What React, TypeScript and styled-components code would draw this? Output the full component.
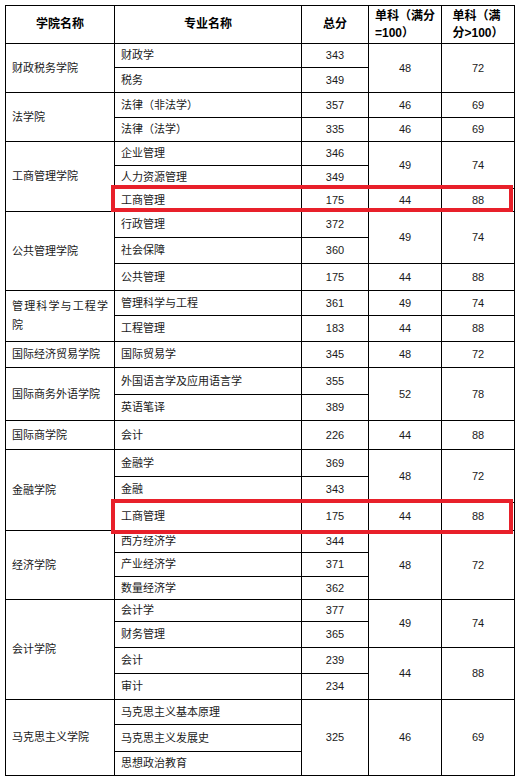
import React from 'react';
import styled, { createGlobalStyle } from 'styled-components';

const Global = createGlobalStyle`
  html, body { margin: 0; padding: 0; background: #fff; }
  body {
    padding: 5px 0 0 5px;
    font-family: "Liberation Sans", "Noto Sans CJK SC", sans-serif;
    color: #1a1a1a;
  }
`;

const ROW_HEIGHTS = [
  24, 25, 25, 24, 24, 23, 23, 26, 26, 27, 25, 26, 26, 27, 26, 29, 27, 26, 28, 22,
  24, 23, 22, 26, 26, 26, 25, 27, 24,
];

const Table = styled.div<{ $rows: string }>`
  display: grid;
  grid-template-columns: 109px 187px 67px 73px 73px;
  grid-template-rows: 38px ${(p) => p.$rows};
  width: max-content;
  border-top: 1px solid #000;
  border-left: 1px solid #000;
`;

const Cell = styled.div<{ $row: number; $span: number; $col: number; $center?: boolean }>`
  grid-row: ${(p) => p.$row} / span ${(p) => p.$span};
  grid-column: ${(p) => p.$col};
  box-sizing: border-box;
  border-right: 1px solid #000;
  border-bottom: 1px solid #000;
  display: flex;
  align-items: center;
  justify-content: ${(p) => (p.$center ? 'center' : 'flex-start')};
  padding: 0 6px;
  min-width: 0;
  font-size: 11px;
  line-height: 19px;
`;

const HeadCell = styled(Cell)`
  justify-content: center;
  padding: 0;
  font-size: 12px;
  font-weight: 700;
  line-height: 17px;
  color: #000;
`;

const HeadText = styled.span`
  display: inline-block;
  text-align: left;
`;

const Label = styled.span<{ $justify?: boolean }>`
  display: block;
  width: 100%;
  text-align: ${(p) => (p.$justify ? 'justify' : 'left')};
`;

const Highlight = styled.div<{ $row: number; $mb: number }>`
  grid-row: ${(p) => p.$row};
  grid-column: 2 / 6;
  margin: -4px 2px ${(p) => -p.$mb}px -4px;
  border: 4px solid #e8202a;
  z-index: 1;
  pointer-events: none;
`;

type Major = { name: string; total?: string; totalSpan?: number; hl?: number };
type Score = { span: number; a: string; b: string };
type Group = { school: string; majors: Major[]; scores: Score[] };

const groups: Group[] = [
  {
    school: '财政税务学院',
    majors: [{ name: '财政学', total: '343' }, { name: '税务', total: '349' }],
    scores: [{ span: 2, a: '48', b: '72' }],
  },
  {
    school: '法学院',
    majors: [{ name: '法律（非法学）', total: '357' }, { name: '法律（法学）', total: '335' }],
    scores: [{ span: 1, a: '46', b: '69' }, { span: 1, a: '46', b: '69' }],
  },
  {
    school: '工商管理学院',
    majors: [
      { name: '企业管理', total: '346' },
      { name: '人力资源管理', total: '349' },
      { name: '工商管理', total: '175', hl: 0 },
    ],
    scores: [{ span: 2, a: '49', b: '74' }, { span: 1, a: '44', b: '88' }],
  },
  {
    school: '公共管理学院',
    majors: [
      { name: '行政管理', total: '372' },
      { name: '社会保障', total: '360' },
      { name: '公共管理', total: '175' },
    ],
    scores: [{ span: 2, a: '49', b: '74' }, { span: 1, a: '44', b: '88' }],
  },
  {
    school: '管理科学与工程学院',
    majors: [{ name: '管理科学与工程', total: '361' }, { name: '工程管理', total: '183' }],
    scores: [{ span: 1, a: '49', b: '74' }, { span: 1, a: '44', b: '88' }],
  },
  {
    school: '国际经济贸易学院',
    majors: [{ name: '国际贸易学', total: '345' }],
    scores: [{ span: 1, a: '48', b: '72' }],
  },
  {
    school: '国际商务外语学院',
    majors: [{ name: '外国语言学及应用语言学', total: '355' }, { name: '英语笔译', total: '389' }],
    scores: [{ span: 2, a: '52', b: '78' }],
  },
  {
    school: '国际商学院',
    majors: [{ name: '会计', total: '226' }],
    scores: [{ span: 1, a: '44', b: '88' }],
  },
  {
    school: '金融学院',
    majors: [
      { name: '金融学', total: '369' },
      { name: '金融', total: '343' },
      { name: '工商管理', total: '175', hl: 3 },
    ],
    scores: [{ span: 2, a: '48', b: '72' }, { span: 1, a: '44', b: '88' }],
  },
  {
    school: '经济学院',
    majors: [
      { name: '西方经济学', total: '344' },
      { name: '产业经济学', total: '371' },
      { name: '数量经济学', total: '362' },
    ],
    scores: [{ span: 3, a: '48', b: '72' }],
  },
  {
    school: '会计学院',
    majors: [
      { name: '会计学', total: '377' },
      { name: '财务管理', total: '365' },
      { name: '会计', total: '239' },
      { name: '审计', total: '234' },
    ],
    scores: [{ span: 2, a: '49', b: '74' }, { span: 2, a: '44', b: '88' }],
  },
  {
    school: '马克思主义学院',
    majors: [
      { name: '马克思主义基本原理', total: '325', totalSpan: 3 },
      { name: '马克思主义发展史' },
      { name: '思想政治教育' },
    ],
    scores: [{ span: 3, a: '46', b: '69' }],
  },
];

export default function App() {
  const cells: React.ReactNode[] = [];
  const overlays: React.ReactNode[] = [];
  let r = 2;
  groups.forEach((g, gi) => {
    const n = g.majors.length;
    cells.push(
      <Cell key={`s${gi}`} $row={r} $span={n} $col={1}>
        <Label $justify>{g.school}</Label>
      </Cell>
    );
    g.majors.forEach((m, i) => {
      cells.push(
        <Cell key={`m${gi}-${i}`} $row={r + i} $span={1} $col={2}>
          <Label>{m.name}</Label>
        </Cell>
      );
      if (m.total) {
        cells.push(
          <Cell key={`t${gi}-${i}`} $row={r + i} $span={m.totalSpan || 1} $col={3} $center>
            {m.total}
          </Cell>
        );
      }
      if (m.hl !== undefined) {
        overlays.push(<Highlight key={`h${gi}-${i}`} $row={r + i} $mb={m.hl} />);
      }
    });
    let sr = r;
    g.scores.forEach((s, si) => {
      cells.push(
        <Cell key={`a${gi}-${si}`} $row={sr} $span={s.span} $col={4} $center>
          {s.a}
        </Cell>
      );
      cells.push(
        <Cell key={`b${gi}-${si}`} $row={sr} $span={s.span} $col={5} $center>
          {s.b}
        </Cell>
      );
      sr += s.span;
    });
    r += n;
  });

  return (
    <>
      <Global />
      <Table $rows={ROW_HEIGHTS.map((h) => `${h}px`).join(' ')}>
        <HeadCell $row={1} $span={1} $col={1}>
          <HeadText>学院名称</HeadText>
        </HeadCell>
        <HeadCell $row={1} $span={1} $col={2}>
          <HeadText>专业名称</HeadText>
        </HeadCell>
        <HeadCell $row={1} $span={1} $col={3}>
          <HeadText>总分</HeadText>
        </HeadCell>
        <HeadCell $row={1} $span={1} $col={4}>
          <HeadText>
            单科（满分
            <br />
            =100）
          </HeadText>
        </HeadCell>
        <HeadCell $row={1} $span={1} $col={5}>
          <HeadText>
            单科（满
            <br />
            分&gt;100）
          </HeadText>
        </HeadCell>
        {cells}
        {overlays}
      </Table>
    </>
  );
}
